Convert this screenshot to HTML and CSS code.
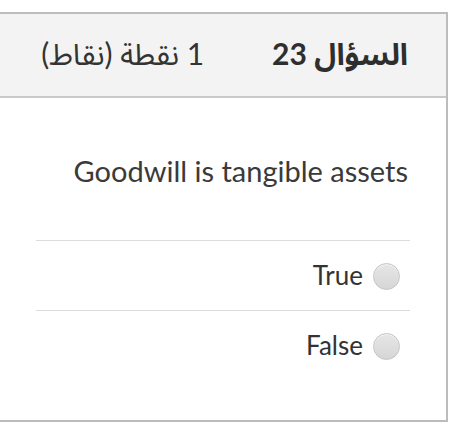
FILE: index.html
```html
<!DOCTYPE html>
<html lang="ar">
<head>
  <meta charset="UTF-8" />
  <meta name="viewport" content="width=device-width, initial-scale=1.0"/>
  <title>السؤال 23</title>
  <link rel="stylesheet" href="styles.css">
</head>
<body>
  <div class="card" dir="rtl">
    <div class="card-header">
      <h3 class="qno">السؤال <span class="num">23</span></h3>
      <div class="grade">1 نقطة (نقاط)</div>
    </div>

    <div class="card-body">
      <p class="question" dir="ltr">Goodwill is tangible assets</p>

      <label class="option">
        <input type="radio" name="q23" />
        <span>True</span>
      </label>
      <label class="option">
        <input type="radio" name="q23" />
        <span>False</span>
      </label>
    </div>
  </div>
</body>
</html>
```

FILE: styles.css
```css
body {
  margin: 0;
  background: white;
  font-family: Lato, "Noto Sans Arabic", "DejaVu Sans", sans-serif;
  color: #333;
}

.card {
  box-sizing: border-box;
  width: 450px;
  margin: 12px 0 0 -2px;
  border: 2px solid #bcbcbc;
  background: white;
}

.card-header {
  box-sizing: border-box;
  height: 84px;
  display: flex;
  align-items: center;
  gap: 68px;
  padding: 0 38px 0 0;
  background: #f3f3f3;
  border-bottom: 2px solid #c9c9c9;
}

.qno {
  margin: 0;
  font-size: 30px;
  font-weight: bold;
  color: #2e2e2e;
}

.num {
  font-family: Lato, sans-serif;
}

.grade {
  font-size: 30px;
  color: #333;
}

.card-body {
  padding: 0 36px 40px;
}

.question {
  margin: 0;
  padding: 56px 2px 52px 0;
  font-size: 29px;
  line-height: 34px;
  text-align: right;
  color: #3a3a3a;
}

.option {
  box-sizing: border-box;
  height: 70px;
  display: flex;
  align-items: center;
  gap: 10px;
  padding: 0 10px 2px;
  border-top: 1px solid #dcdcdc;
  font-size: 26px;
  color: #333;
}

.option input {
  appearance: none;
  width: 27px;
  height: 27px;
  margin: 4px 0 0;
  border-radius: 50%;
  border: 1px solid #c4c4c4;
  background: linear-gradient(#e6e6e6, #d6d6d6);
  box-shadow: inset 0 1px 1px rgba(255, 255, 255, 0.6);
}
```
